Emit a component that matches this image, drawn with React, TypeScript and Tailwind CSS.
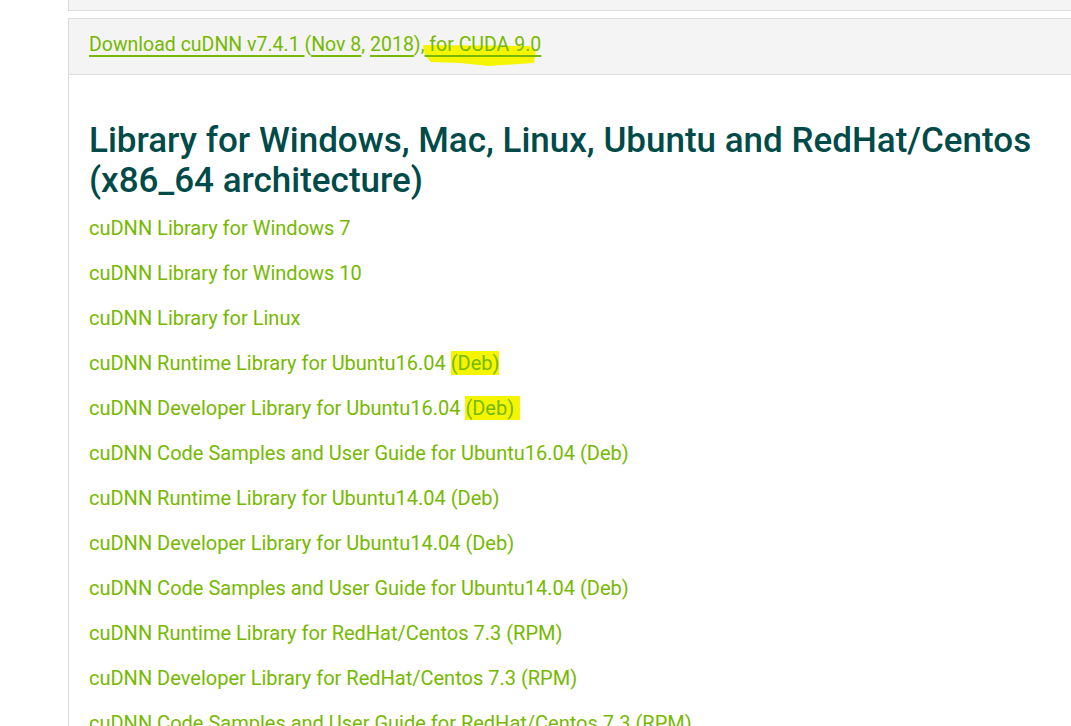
const links = [
  { text: "cuDNN Library for Windows 7" },
  { text: "cuDNN Library for Windows 10" },
  { text: "cuDNN Library for Linux" },
  { text: "cuDNN Runtime Library for Ubuntu16.04", tag: "(Deb)", mark: true },
  { text: "cuDNN Developer Library for Ubuntu16.04", tag: "(Deb)", mark: true, wide: true },
  { text: "cuDNN Code Samples and User Guide for Ubuntu16.04", tag: "(Deb)" },
  { text: "cuDNN Runtime Library for Ubuntu14.04", tag: "(Deb)" },
  { text: "cuDNN Developer Library for Ubuntu14.04", tag: "(Deb)" },
  { text: "cuDNN Code Samples and User Guide for Ubuntu14.04", tag: "(Deb)" },
  { text: "cuDNN Runtime Library for RedHat/Centos 7.3", tag: "(RPM)" },
  { text: "cuDNN Developer Library for RedHat/Centos 7.3", tag: "(RPM)" },
  { text: "cuDNN Code Samples and User Guide for RedHat/Centos 7.3", tag: "(RPM)" },
];

const u = "underline decoration-[#76b900] decoration-2 underline-offset-4";

const App = () => {
  return (
    <div
      className="h-[726px] w-[1071px] overflow-hidden bg-white pl-[68px]"
      style={{ fontFamily: "Roboto, 'Noto Sans', sans-serif" }}
    >
      <div className="h-[11px] border-b border-l border-[#dddddd] bg-[#f4f4f4]"></div>
      <div className="mt-[7px] flex h-[57px] items-center border-y border-l border-[#dddddd] bg-[#f4f4f4] pb-[4px] pl-[20px]">
        <div className="text-[19.5px] text-[#76b900]">
          <span className={u}>Download cuDNN v7.4.1 </span>(<span className={u}>Nov 8</span>,{" "}
          <span className={u}>2018</span>),
          <span className="relative">
            <svg
              className="absolute left-[-4px] top-[10px] h-[24px] w-full"
              viewBox="0 0 120 24"
              preserveAspectRatio="none"
            >
              <path d="M2 2 L112 3 L118 8 L116 20 L70 23 L40 20 L10 19 L4 12 Z" fill="#f5f500" />
            </svg>
            <span className={`relative ${u}`}> for CUDA 9.0</span>
          </span>
        </div>
      </div>
      <div className="border-l border-[#dddddd] pl-[20px] pt-[46px]">
        <h2 className="text-[35px] leading-[40px] font-medium text-[#004b49]">
          Library for Windows, Mac, Linux, Ubuntu and RedHat/Centos
          <br />
          (x86_64 architecture)
        </h2>
        <ul className="mt-[15px] flex flex-col">
          {links.map((l) => (
            <li key={l.text} className="h-[45px] text-[20px] leading-[24px] text-[#76b900]">
              {l.text}{" "}
              {l.tag && (
                <span className={l.mark ? (l.wide ? "bg-[#f5f500] pr-[6px]" : "bg-[#f5f500]") : ""}>{l.tag}</span>
              )}
            </li>
          ))}
        </ul>
      </div>
    </div>
  );
};

export default App;
